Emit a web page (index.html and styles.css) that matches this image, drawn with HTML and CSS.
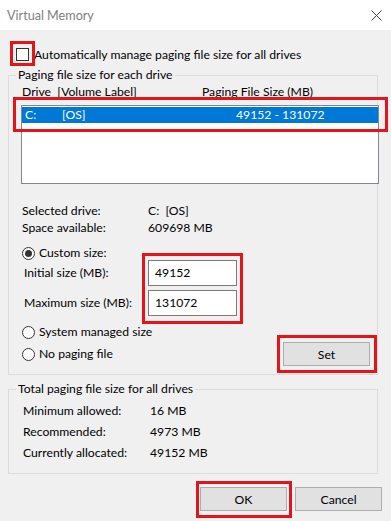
FILE: index.html
```html
<!DOCTYPE html>
<html lang="en">
<head>
    <meta charset="UTF-8">
    <meta name="viewport" content="width=device-width, initial-scale=1.0">
    <link rel="stylesheet" href="styles.css">
    <title>Virtual Memory</title>
</head>
<body>
    <div class="titlebar">
        <span class="title">Virtual Memory</span>
        <svg class="close" width="11" height="11" viewBox="0 0 11 11">
            <path d="M0.5 0.5 L10.5 10.5 M10.5 0.5 L0.5 10.5" stroke="#444" stroke-width="1" fill="none"/>
        </svg>
    </div>

    <div class="auto-row">
        <span class="mark">
            <span class="checkbox"></span>
            <span class="callout callout-check"></span>
        </span>
        <span class="auto-label">Automatically manage paging file size for all drives</span>
    </div>

    <fieldset class="group drives">
        <legend>Paging file size for each drive</legend>
        <div class="list-head">
            <span class="col-drive">Drive  [Volume Label]</span>
            <span class="col-size">Paging File Size (MB)</span>
        </div>
        <div class="listbox">
            <div class="list-row selected">
                <span class="c1">C:</span>
                <span class="c2">[OS]</span>
                <span class="c3">49152 - 131072</span>
                <span class="callout callout-row"></span>
            </div>
        </div>

        <div class="info">
            <div class="info-row"><span class="key">Selected drive:</span><span>C:  [OS]</span></div>
            <div class="info-row"><span class="key">Space available:</span><span>609698 MB</span></div>
        </div>

        <div class="radio-row custom">
            <span class="radio on"></span>
            <span>Custom size:</span>
        </div>

        <div class="sizes">
            <div class="size-labels">
                <span>Initial size (MB):</span>
                <span>Maximum size (MB):</span>
            </div>
            <div class="size-inputs">
                <input type="text" value="49152">
                <input type="text" value="131072">
                <span class="callout callout-inputs"></span>
            </div>
        </div>

        <div class="bottom-row">
            <div class="radios">
                <div class="radio-row">
                    <span class="radio"></span>
                    <span>System managed size</span>
                </div>
                <div class="radio-row">
                    <span class="radio"></span>
                    <span>No paging file</span>
                </div>
            </div>
            <div class="btn-wrap set-wrap">
                <button class="btn">Set</button>
                <span class="callout callout-set"></span>
            </div>
        </div>
    </fieldset>

    <fieldset class="group totals">
        <legend>Total paging file size for all drives</legend>
        <div class="total-row"><span class="key">Minimum allowed:</span><span>16 MB</span></div>
        <div class="total-row"><span class="key">Recommended:</span><span>4973 MB</span></div>
        <div class="total-row"><span class="key">Currently allocated:</span><span>49152 MB</span></div>
    </fieldset>

    <div class="actions">
        <div class="btn-wrap">
            <button class="btn">OK</button>
            <span class="callout callout-ok"></span>
        </div>
        <button class="btn">Cancel</button>
    </div>
</body>
</html>
```

FILE: styles.css
```css
body {
    font-family: Lato, "Noto Sans", sans-serif;
    font-size: 12.2px;
    color: #000;
    background-color: #f0f0f0;
    margin: 0;
    padding: 0;
    width: 391px;
    height: 521px;
    overflow: hidden;
}

.titlebar {
    height: 30px;
    background-color: #fff;
    display: flex;
    align-items: center;
    justify-content: space-between;
    padding: 0 9px 0 7px;
}

.title {
    color: #808080;
    font-size: 12.6px;
}

/* red annotation frames drawn over the controls */
.callout {
    position: absolute;
    border: 3px solid #e4141b;
    pointer-events: none;
}

.auto-row {
    display: flex;
    align-items: center;
    height: 16px;
    margin: 16px 0 0 16px;
}

.mark {
    position: relative;
    display: block;
}

.checkbox {
    display: block;
    width: 13px;
    height: 13px;
    box-sizing: border-box;
    border: 1px solid #333;
    background-color: #fff;
}

.callout-check {
    inset: -7px -6px -5px -6px;
}

.auto-label {
    margin-left: 5px;
}

.group {
    width: 370px;
    box-sizing: border-box;
    margin: 5px 0 0 8px;
    border: 1px solid #dcdcdc;
    min-width: 0;
}

.group legend {
    padding: 0 2px;
    line-height: 16px;
}

.drives {
    padding: 1px 0 8px 12px;
}

.drives legend {
    margin-left: -5px;
}

.list-head {
    display: flex;
    line-height: 16px;
    padding-left: 1px;
    white-space: pre;
}

.col-drive {
    width: 180px;
}

.listbox {
    height: 79px;
    box-sizing: border-box;
    margin: 5px -2px 0 0;
    border: 1px solid #828790;
    background-color: #fff;
    padding-top: 1px;
}

.list-row {
    position: relative;
    display: flex;
    height: 16px;
    line-height: 16px;
    padding-left: 3px;
}

.list-row.selected {
    background-color: #0078d7;
    color: #fff;
}

.c1 {
    width: 37px;
}

.c2 {
    width: 174px;
}

.callout-row {
    inset: -10px -10px -9px -9px;
}

.info {
    margin-top: 18px;
}

.info-row {
    display: flex;
    line-height: 17px;
    padding-left: 1px;
    white-space: pre;
}

.info-row .key {
    width: 126px;
}

.radio-row {
    display: flex;
    align-items: center;
    height: 16px;
    line-height: 16px;
    padding-left: 1px;
}

.radio-row.custom {
    margin-top: 9px;
}

.radio {
    position: relative;
    width: 13px;
    height: 13px;
    box-sizing: border-box;
    border: 1px solid #333;
    border-radius: 50%;
    background-color: #fff;
    margin-right: 4px;
}

.radio.on::after {
    content: "";
    position: absolute;
    left: 2px;
    top: 2px;
    width: 7px;
    height: 7px;
    border-radius: 50%;
    background-color: #333;
}

.sizes {
    display: flex;
    margin-top: -1px;
}

.size-labels {
    width: 124px;
    padding-left: 3px;
    display: flex;
    flex-direction: column;
    gap: 4px;
}

.size-labels span {
    height: 26px;
    line-height: 26px;
}

.size-inputs {
    position: relative;
    display: flex;
    flex-direction: column;
    gap: 4px;
}

.size-inputs input {
    width: 89px;
    height: 26px;
    box-sizing: border-box;
    border: 1px solid #7a7a7a;
    background-color: #fff;
    padding: 0 0 2px 6px;
    margin: 0;
    font-family: inherit;
    font-size: 12.2px;
    color: #000;
}

.callout-inputs {
    inset: -7px -6px -8px -6px;
}

.bottom-row {
    display: flex;
    justify-content: space-between;
    align-items: flex-end;
    margin-top: 8px;
    padding-right: 7px;
}

.radios {
    display: flex;
    flex-direction: column;
    gap: 6px;
    padding-bottom: 4px;
}

.btn-wrap {
    position: relative;
}

.btn {
    display: block;
    width: 87px;
    height: 24px;
    margin: 0;
    padding: 0;
    border: 1px solid #adadad;
    background-color: #e1e1e1;
    font-family: inherit;
    font-size: 12.2px;
    color: #000;
}

.callout-set {
    inset: -7px -7px -7px -6px;
}

.totals {
    margin-top: 6px;
    padding: 3px 0 10px 14px;
}

.totals legend {
    margin-left: -7px;
}

.total-row {
    display: flex;
    line-height: 21px;
}

.total-row .key {
    width: 127px;
}

.actions {
    display: flex;
    justify-content: flex-end;
    gap: 8px;
    margin-top: 13px;
    padding-right: 9px;
}

.callout-ok {
    inset: -6px -5px -7px -4px;
}
```
